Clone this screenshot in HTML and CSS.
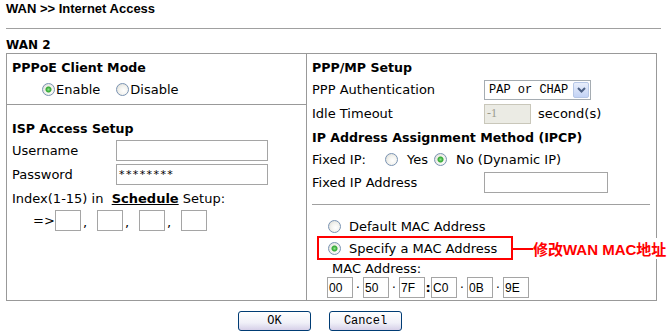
FILE: index.html
```html
<!DOCTYPE html>
<html lang="en">
<head>
  <meta charset="UTF-8" />
  <title>WAN - Internet Access</title>
  <link rel="stylesheet" href="styles.css">
</head>
<body>
  <div class="page">
    <h1 class="title">WAN &gt;&gt; Internet Access</h1>
    <div class="rule"></div>
    <h2 class="caption">WAN 2</h2>

    <div class="panel">
      <!-- left column -->
      <div class="col col-left">
        <div class="section mode">
          <div class="row head">PPPoE Client Mode</div>
          <div class="row mode-opts">
            <label class="opt"><span class="radio on"></span>Enable</label>
            <label class="opt"><span class="radio"></span>Disable</label>
          </div>
        </div>

        <div class="section isp">
          <div class="row head">ISP Access Setup</div>
          <div class="row r-user">
            <span class="lbl-left">Username</span>
            <span class="field w152"></span>
          </div>
          <div class="row r-pass">
            <span class="lbl-left">Password</span>
            <span class="field w152 pass">********</span>
          </div>
          <div class="row r-index">Index(1-15) in&nbsp;&nbsp;<a class="link">Schedule</a>&nbsp;Setup:</div>
          <div class="row r-sched">
            <span class="arrow">=&gt;</span>
            <span class="field small"></span><span class="comma">,</span>
            <span class="field small"></span><span class="comma">,</span>
            <span class="field small"></span><span class="comma">,</span>
            <span class="field small"></span>
          </div>
        </div>
      </div>

      <!-- right column -->
      <div class="col col-right">
        <div class="row head">PPP/MP Setup</div>
        <div class="row r-auth">
          <span class="lbl-right">PPP Authentication</span>
          <span class="select">
            <span class="select-text">PAP or CHAP</span>
            <span class="select-btn">
              <svg width="9" height="6" viewBox="0 0 9 6"><path d="M1 1 L4.5 4.5 L8 1" fill="none" stroke="#4d6185" stroke-width="2"/></svg>
            </span>
          </span>
        </div>
        <div class="row r-idle">
          <span class="lbl-right">Idle Timeout</span>
          <span class="field disabled">-1</span>
          <span class="unit">second(s)</span>
        </div>
        <div class="row head r-ipcp">IP Address Assignment Method (IPCP)</div>
        <div class="row r-fixed">
          <span class="fixed-lbl">Fixed IP:</span>
          <label class="opt wide yes"><span class="radio"></span>Yes</label>
          <label class="opt wide"><span class="radio on"></span>No (Dynamic IP)</label>
        </div>
        <div class="row r-addr">
          <span class="lbl-right">Fixed IP Address</span>
          <span class="field w124"></span>
        </div>
        <div class="divider"></div>
        <div class="row r-default">
          <label class="opt wide"><span class="radio"></span>Default MAC Address</label>
        </div>
        <div class="row r-specify">
          <label class="opt wide"><span class="radio on"></span>Specify a MAC Address</label>
          <span class="note"><span class="note-line"></span>修改WAN MAC地址</span>
        </div>
        <div class="row r-maclbl">MAC Address:</div>
        <div class="row r-mac">
          <span class="field mac">00</span>
          <span class="sep">·</span><span class="field mac">50</span>
          <span class="sep">·</span><span class="field mac">7F</span>
          <span class="sep colon">:</span><span class="field mac">C0</span>
          <span class="sep">·</span><span class="field mac">0B</span>
          <span class="sep">·</span><span class="field mac">9E</span>
        </div>
      </div>
    </div>

    <div class="actions">
      <button class="btn">OK</button>
      <button class="btn">Cancel</button>
    </div>
  </div>
</body>
</html>
```

FILE: styles.css
```css
* {
  box-sizing: border-box;
  margin: 0;
  padding: 0;
}

body {
  font-family: "DejaVu Sans", Verdana, sans-serif;
  font-size: 13px;
  color: #000;
  background: #fff;
}

.page {
  width: 667px;
  height: 335px;
  padding-left: 6px;
}

.title {
  font-family: "Liberation Sans", Arial, sans-serif;
  font-size: 13px;
  font-weight: bold;
  height: 28px;
  line-height: 16px;
  padding-top: 1px;
}

.rule {
  width: 655px;
  height: 1px;
  background: #a0a0a0;
}

.caption {
  font-size: 12px;
  font-weight: bold;
  height: 24px;
  line-height: 14px;
  padding-top: 9px;
}

/* main two-column box */
.panel {
  display: grid;
  grid-template-columns: 300px 350px;
  width: 651px;
  height: 248px;
  border: 1px solid #999;
}

.col-left {
  border-right: 1px solid #999;
}

.col-right {
  padding: 2px 0 0 5px;
  position: relative;
}

.row {
  display: flex;
  align-items: center;
  white-space: nowrap;
}

.head {
  font-weight: bold;
  font-size: 12.6px;
  height: 22px;
}

/* left column */
.section {
  padding-left: 5px;
}

.mode {
  padding-top: 2px;
  height: 51px;
  border-bottom: 1px solid #999;
}

.mode-opts {
  height: 22px;
  padding-left: 30px;
  gap: 16px;
}

.isp {
  padding-top: 12px;
}

.lbl-left {
  width: 104px;
}

.r-user { height: 23px; }
.r-pass { height: 25px; }
.r-index { height: 22px; }
.r-sched { height: 22px; padding-left: 21px; }

.arrow {
  width: 22px;
}

.comma {
  width: 16px;
  padding-left: 2px;
  align-self: flex-end;
  padding-bottom: 4px;
  line-height: 8px;
}

.link {
  font-weight: bold;
  text-decoration: underline;
}

/* form bits */
.field {
  display: inline-flex;
  align-items: center;
  height: 21px;
  border: 1px solid #a5a5a5;
  background: #fff;
  padding-left: 2px;
  font-family: "Liberation Sans", Arial, sans-serif;
  font-size: 12px;
}

.w152 { width: 152px; }
.w124 { width: 124px; }
.small { width: 26px; height: 21px; }

.pass {
  font-family: "DejaVu Sans", sans-serif;
  font-size: 11px;
  letter-spacing: 1.4px;
}

.disabled {
  width: 47px;
  height: 20px;
  background: #ebebe4;
  border-color: #c9c7ba;
  color: #9a9a8c;
  font-family: "Liberation Serif", serif;
  font-size: 12px;
}

.unit {
  margin-left: 7px;
}

.select {
  display: inline-flex;
  align-items: center;
  width: 107px;
  height: 20px;
  border: 1px solid #a5acb2;
  padding: 1px;
  font-family: "Liberation Mono", monospace;
  font-size: 12px;
}

.select-text {
  flex: 1;
  padding-left: 3px;
}

.select-btn {
  display: flex;
  align-items: center;
  justify-content: center;
  width: 16px;
  height: 16px;
  border: 1px solid #b6c7e6;
  border-radius: 2px;
  background: linear-gradient(#e8eefb, #c3d3f5);
}

/* radios drawn like the old XP ones */
.opt {
  display: inline-flex;
  align-items: center;
  gap: 1px;
}

.opt.wide {
  gap: 8px;
}

.radio {
  width: 13px;
  height: 13px;
  border-radius: 50%;
  border: 1px solid #7a93b3;
  background: radial-gradient(circle at 60% 60%, #fff 0, #f3f3ef 45%, #d7d7d0 100%);
}

.radio.on {
  background:
    radial-gradient(circle, #8fe38f 0, #2fa52f 2.5px, transparent 3.5px),
    radial-gradient(circle at 60% 60%, #fff 0, #f3f3ef 45%, #d7d7d0 100%);
}

/* right column */
.lbl-right {
  width: 172px;
}

.r-auth { height: 23px; }
.r-idle { height: 25px; }
.r-fixed { height: 23px; }
.r-fixed .opt.wide { gap: 9px; }
.r-fixed .yes { margin-right: 6px; }
.r-addr { height: 22px; }

.fixed-lbl {
  width: 73px;
}

.divider {
  height: 1px;
  width: 338px;
  margin: 11px 0 12px;
  background: #a0a0a0;
}

.r-default {
  height: 19px;
  padding-left: 16px;
}

.r-specify {
  width: 196px;
  height: 24px;
  margin-left: 5px;
  padding-left: 9px;
  border: 2px solid #f00;
  position: relative;
}

.note {
  position: absolute;
  left: 194px;
  top: 0;
  display: flex;
  align-items: center;
  color: #f00;
  font-family: "Liberation Sans", "Noto Sans CJK SC", sans-serif;
  font-size: 15px;
  font-weight: bold;
  background: #fff;
  padding-right: 2px;
}

.note-line {
  width: 20px;
  height: 2px;
  background: #f00;
}

.r-maclbl {
  height: 16px;
  padding-left: 20px;
}

.r-mac {
  height: 23px;
  padding-left: 15px;
}

.mac {
  width: 26px;
  height: 21px;
  padding-left: 1px;
}

.sep {
  width: 10px;
  text-align: center;
  font-size: 12px;
}

.colon {
  width: 6px;
  font-weight: bold;
  font-size: 13px;
}

/* buttons */
.actions {
  display: flex;
  gap: 18px;
  margin: 10px 0 0 232px;
}

.btn {
  width: 73px;
  height: 20px;
  border: 1px solid #003c74;
  border-radius: 3px;
  background: linear-gradient(#ffffff, #f0f0f8 60%, #d6d0e8);
  font-family: "Liberation Mono", monospace;
  font-size: 12px;
  color: #000;
}
```
